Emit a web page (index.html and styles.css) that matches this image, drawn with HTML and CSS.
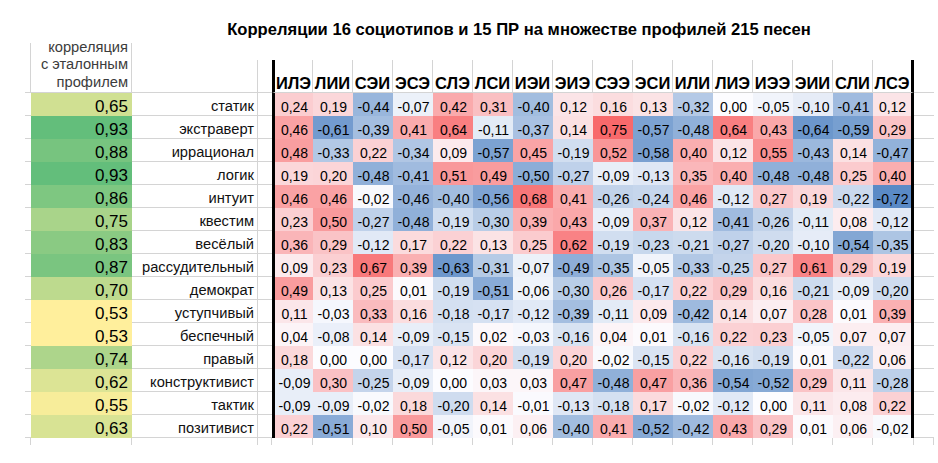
FILE: index.html
```html
<!DOCTYPE html>
<html lang="ru">
<head>
<meta charset="utf-8">
<title>Корреляции 16 социотипов и 15 ПР</title>
<link rel="stylesheet" href="styles.css">
</head>
<body>
<div class="page">
  <h1 class="title">Корреляции 16 социотипов и 15 ПР на множестве профилей 215 песен</h1>
  <div class="sheet">
    <div class="s sh"></div><div class="hc">корреляция<br>с эталонным<br>профилем</div><div class="ha"></div>
    <div class="s sh sb"></div><div class="l hb"></div><div class="g hb"></div><div class="h f">ИЛЭ</div><div class="h">ЛИИ</div><div class="h">СЭИ</div><div class="h">ЭСЭ</div><div class="h">СЛЭ</div><div class="h">ЛСИ</div><div class="h">ИЭИ</div><div class="h">ЭИЭ</div><div class="h">СЭЭ</div><div class="h">ЭСИ</div><div class="h">ИЛИ</div><div class="h">ЛИЭ</div><div class="h">ИЭЭ</div><div class="h">ЭИИ</div><div class="h">СЛИ</div><div class="h z">ЛСЭ</div><div class="r"></div>

    <div class="s"></div><div class="n">0,65</div><div class="l">статик</div><div class="g"></div><div class="d f">0,24</div><div class="d">0,19</div><div class="d">-0,44</div><div class="d">-0,07</div><div class="d">0,42</div><div class="d">0,31</div><div class="d">-0,40</div><div class="d">0,12</div><div class="d">0,16</div><div class="d">0,13</div><div class="d">-0,32</div><div class="d">0,00</div><div class="d">-0,05</div><div class="d">-0,10</div><div class="d">-0,41</div><div class="d z">0,12</div><div class="r"></div>

    <div class="s"></div><div class="n">0,93</div><div class="l">экстраверт</div><div class="g"></div><div class="d f">0,46</div><div class="d">-0,61</div><div class="d">-0,39</div><div class="d">0,41</div><div class="d">0,64</div><div class="d">-0,11</div><div class="d">-0,37</div><div class="d">0,14</div><div class="d">0,75</div><div class="d">-0,57</div><div class="d">-0,48</div><div class="d">0,64</div><div class="d">0,43</div><div class="d">-0,64</div><div class="d">-0,59</div><div class="d z">0,29</div><div class="r"></div>

    <div class="s"></div><div class="n">0,88</div><div class="l">иррационал</div><div class="g"></div><div class="d f">0,48</div><div class="d">-0,33</div><div class="d">0,22</div><div class="d">-0,34</div><div class="d">0,09</div><div class="d">-0,57</div><div class="d">0,45</div><div class="d">-0,19</div><div class="d">0,52</div><div class="d">-0,58</div><div class="d">0,40</div><div class="d">0,12</div><div class="d">0,55</div><div class="d">-0,43</div><div class="d">0,14</div><div class="d z">-0,47</div><div class="r"></div>

    <div class="s"></div><div class="n">0,93</div><div class="l">логик</div><div class="g"></div><div class="d f">0,19</div><div class="d">0,20</div><div class="d">-0,48</div><div class="d">-0,41</div><div class="d">0,51</div><div class="d">0,49</div><div class="d">-0,50</div><div class="d">-0,27</div><div class="d">-0,09</div><div class="d">-0,13</div><div class="d">0,35</div><div class="d">0,40</div><div class="d">-0,48</div><div class="d">-0,48</div><div class="d">0,25</div><div class="d z">0,40</div><div class="r"></div>

    <div class="s"></div><div class="n">0,86</div><div class="l">интуит</div><div class="g"></div><div class="d f">0,46</div><div class="d">0,46</div><div class="d">-0,02</div><div class="d">-0,46</div><div class="d">-0,40</div><div class="d">-0,56</div><div class="d">0,68</div><div class="d">0,41</div><div class="d">-0,26</div><div class="d">-0,24</div><div class="d">0,46</div><div class="d">-0,12</div><div class="d">0,27</div><div class="d">0,19</div><div class="d">-0,22</div><div class="d z">-0,72</div><div class="r"></div>

    <div class="s"></div><div class="n">0,75</div><div class="l">квестим</div><div class="g"></div><div class="d f">0,23</div><div class="d">0,50</div><div class="d">-0,27</div><div class="d">-0,48</div><div class="d">-0,19</div><div class="d">-0,30</div><div class="d">0,39</div><div class="d">0,43</div><div class="d">-0,09</div><div class="d">0,37</div><div class="d">0,12</div><div class="d">-0,41</div><div class="d">-0,26</div><div class="d">-0,11</div><div class="d">0,08</div><div class="d z">-0,12</div><div class="r"></div>

    <div class="s"></div><div class="n">0,83</div><div class="l">весёлый</div><div class="g"></div><div class="d f">0,36</div><div class="d">0,29</div><div class="d">-0,12</div><div class="d">0,17</div><div class="d">0,22</div><div class="d">0,13</div><div class="d">0,25</div><div class="d">0,62</div><div class="d">-0,19</div><div class="d">-0,23</div><div class="d">-0,21</div><div class="d">-0,27</div><div class="d">-0,20</div><div class="d">-0,10</div><div class="d">-0,54</div><div class="d z">-0,35</div><div class="r"></div>

    <div class="s"></div><div class="n">0,87</div><div class="l">рассудительный</div><div class="g"></div><div class="d f">0,09</div><div class="d">0,23</div><div class="d">0,67</div><div class="d">0,39</div><div class="d">-0,63</div><div class="d">-0,31</div><div class="d">-0,07</div><div class="d">-0,49</div><div class="d">-0,35</div><div class="d">-0,05</div><div class="d">-0,33</div><div class="d">-0,25</div><div class="d">0,27</div><div class="d">0,61</div><div class="d">0,29</div><div class="d z">0,19</div><div class="r"></div>

    <div class="s"></div><div class="n">0,70</div><div class="l">демократ</div><div class="g"></div><div class="d f">0,49</div><div class="d">0,13</div><div class="d">0,25</div><div class="d">0,01</div><div class="d">-0,19</div><div class="d">-0,51</div><div class="d">-0,06</div><div class="d">-0,30</div><div class="d">0,26</div><div class="d">-0,17</div><div class="d">0,22</div><div class="d">0,29</div><div class="d">0,16</div><div class="d">-0,21</div><div class="d">-0,09</div><div class="d z">-0,20</div><div class="r"></div>

    <div class="s"></div><div class="n">0,53</div><div class="l">уступчивый</div><div class="g"></div><div class="d f">0,11</div><div class="d">-0,03</div><div class="d">0,33</div><div class="d">0,16</div><div class="d">-0,18</div><div class="d">-0,17</div><div class="d">-0,12</div><div class="d">-0,39</div><div class="d">-0,11</div><div class="d">0,09</div><div class="d">-0,42</div><div class="d">0,14</div><div class="d">0,07</div><div class="d">0,28</div><div class="d">0,01</div><div class="d z">0,39</div><div class="r"></div>

    <div class="s"></div><div class="n">0,53</div><div class="l">беспечный</div><div class="g"></div><div class="d f">0,04</div><div class="d">-0,08</div><div class="d">0,14</div><div class="d">-0,09</div><div class="d">-0,15</div><div class="d">0,02</div><div class="d">-0,03</div><div class="d">-0,16</div><div class="d">0,04</div><div class="d">0,01</div><div class="d">-0,16</div><div class="d">0,22</div><div class="d">0,23</div><div class="d">-0,05</div><div class="d">0,07</div><div class="d z">0,07</div><div class="r"></div>

    <div class="s"></div><div class="n">0,74</div><div class="l">правый</div><div class="g"></div><div class="d f">0,18</div><div class="d">0,00</div><div class="d">0,00</div><div class="d">-0,17</div><div class="d">0,12</div><div class="d">0,20</div><div class="d">-0,19</div><div class="d">0,20</div><div class="d">-0,02</div><div class="d">-0,15</div><div class="d">0,22</div><div class="d">-0,16</div><div class="d">-0,19</div><div class="d">0,01</div><div class="d">-0,22</div><div class="d z">0,06</div><div class="r"></div>

    <div class="s"></div><div class="n">0,62</div><div class="l">конструктивист</div><div class="g"></div><div class="d f">-0,09</div><div class="d">0,30</div><div class="d">-0,25</div><div class="d">-0,09</div><div class="d">0,00</div><div class="d">0,03</div><div class="d">0,03</div><div class="d">0,47</div><div class="d">-0,48</div><div class="d">0,47</div><div class="d">0,36</div><div class="d">-0,54</div><div class="d">-0,52</div><div class="d">0,29</div><div class="d">0,11</div><div class="d z">-0,28</div><div class="r"></div>

    <div class="s"></div><div class="n">0,55</div><div class="l">тактик</div><div class="g"></div><div class="d f">-0,09</div><div class="d">-0,09</div><div class="d">-0,02</div><div class="d">0,18</div><div class="d">-0,20</div><div class="d">0,14</div><div class="d">-0,01</div><div class="d">-0,13</div><div class="d">-0,18</div><div class="d">0,17</div><div class="d">-0,02</div><div class="d">-0,12</div><div class="d">0,00</div><div class="d">0,11</div><div class="d">0,08</div><div class="d z">0,22</div><div class="r"></div>

    <div class="s"></div><div class="n">0,63</div><div class="l">позитивист</div><div class="g"></div><div class="d f">0,22</div><div class="d">-0,51</div><div class="d">0,10</div><div class="d">0,50</div><div class="d">-0,05</div><div class="d">0,01</div><div class="d">0,06</div><div class="d">-0,40</div><div class="d">0,41</div><div class="d">-0,52</div><div class="d">-0,42</div><div class="d">0,43</div><div class="d">0,29</div><div class="d">0,01</div><div class="d">0,06</div><div class="d z">-0,02</div><div class="r"></div>

    <div class="t"></div><div class="t"></div><div class="t"></div><div class="t"></div><div class="t"></div><div class="t"></div><div class="t"></div><div class="t"></div><div class="t"></div><div class="t"></div><div class="t"></div><div class="t"></div><div class="t"></div><div class="t"></div><div class="t"></div><div class="t"></div><div class="t"></div><div class="t"></div><div class="t"></div><div class="t"></div><div class="t"></div><div class="t tr"></div>
  </div>
</div>
<script src="script.js"></script>
</body>
</html>
```

FILE: styles.css
```css
html, body {
  margin: 0;
  padding: 0;
  background: #ffffff;
}
body {
  font-family: "Liberation Sans", Arial, sans-serif;
  color: #000;
}
.page {
  width: 938px;
  height: 463px;
  overflow: hidden;
}
.title {
  margin: 0;
  padding: 19px 0 0 100px;
  height: 21px;
  font-size: 16.6px;
  line-height: 21px;
  font-weight: bold;
  text-align: center;
  white-space: nowrap;
}
.sheet {
  margin: 3px 0 0 25px;
  display: grid;
  grid-template-columns: 6px 101px 126px 14px 41px repeat(14, 40px) 41px 20px;
  grid-template-rows: 17px 33px repeat(15, 23px) 7px;
}
.sheet > div {
  box-sizing: border-box;
  min-width: 0;
}
/* strips and white cells */
.s, .r {
  border-bottom: 1px solid #d4d4d4;
}
.sh {
  border-bottom: none;
  border-right: 1px solid #d4d4d4;
}
.sh.sb {
  border-bottom: 1px solid #d4d4d4;
}
.hc {
  grid-row: span 2;
  border-right: 1px solid #d4d4d4;
  border-bottom: 1px solid #d4d4d4;
  display: flex;
  align-items: flex-end;
  justify-content: flex-end;
  text-align: right;
  padding: 0 3px 1px 0;
  font-size: 14.7px;
  line-height: 17.5px;
  color: #3c3c3c;
  white-space: nowrap;
}
.ha {
  grid-column: 3 / -1;
}
.l {
  border-right: 1px solid #d4d4d4;
  border-bottom: 1px solid #d4d4d4;
  display: flex;
  align-items: flex-end;
  justify-content: flex-end;
  padding: 0 3px 1px 0;
  font-size: 14.7px;
  line-height: 16px;
  color: #111;
  white-space: nowrap;
}
.g {
  border-bottom: 1px solid #d4d4d4;
}
.h {
  border-right: 1px solid #d4d4d4;
  border-bottom: 1px solid #d4d4d4;
  display: flex;
  align-items: flex-end;
  justify-content: center;
  font-size: 16.5px;
  line-height: 18px;
  font-weight: bold;
  white-space: nowrap;
}
.n {
  display: flex;
  align-items: flex-end;
  justify-content: flex-end;
  padding: 0 4px 0 0;
  font-size: 17px;
  line-height: 19px;
  white-space: nowrap;
}
.d {
  display: flex;
  align-items: flex-end;
  justify-content: center;
  padding: 0 0 1px 1px;
  font-size: 14px;
  line-height: 16px;
  white-space: nowrap;
  background: #fcfcff;
}
.f {
  border-left: 3px solid #000;
}
.z {
  border-right: 3px solid #000;
}
.h.z {
  border-right: 3px solid #000;
}
.t {
  border-right: 1px solid #d4d4d4;
}
.t.tr {
  border-right: none;
}
```

FILE: script.js
```js
(function () {
  function hex(c) {
    return [parseInt(c.slice(1, 3), 16), parseInt(c.slice(3, 5), 16), parseInt(c.slice(5, 7), 16)];
  }
  function mix(a, b, t) {
    t = Math.max(0, Math.min(1, t));
    var A = hex(a), B = hex(b);
    return 'rgb(' + [0, 1, 2].map(function (i) {
      return Math.round(A[i] + (B[i] - A[i]) * t);
    }).join(',') + ')';
  }
  function num(el) {
    return parseFloat(el.textContent.replace(',', '.'));
  }
  var cells = document.querySelectorAll('.sheet .d');
  var min = 0, max = 0;
  cells.forEach(function (c) {
    var v = num(c);
    if (v < min) min = v;
    if (v > max) max = v;
  });
  cells.forEach(function (c) {
    var v = num(c);
    c.style.backgroundColor = v >= 0
      ? mix('#FCFCFF', '#F8696B', v / max)
      : mix('#FCFCFF', '#5A8AC6', v / min);
  });
  var ns = document.querySelectorAll('.sheet .n');
  var lo = 1, hi = 0;
  ns.forEach(function (c) {
    var v = num(c);
    if (v < lo) lo = v;
    if (v > hi) hi = v;
  });
  ns.forEach(function (c) {
    c.style.backgroundColor = mix('#FFEF9C', '#63BE7B', (num(c) - lo) / (hi - lo));
  });
})();
```
